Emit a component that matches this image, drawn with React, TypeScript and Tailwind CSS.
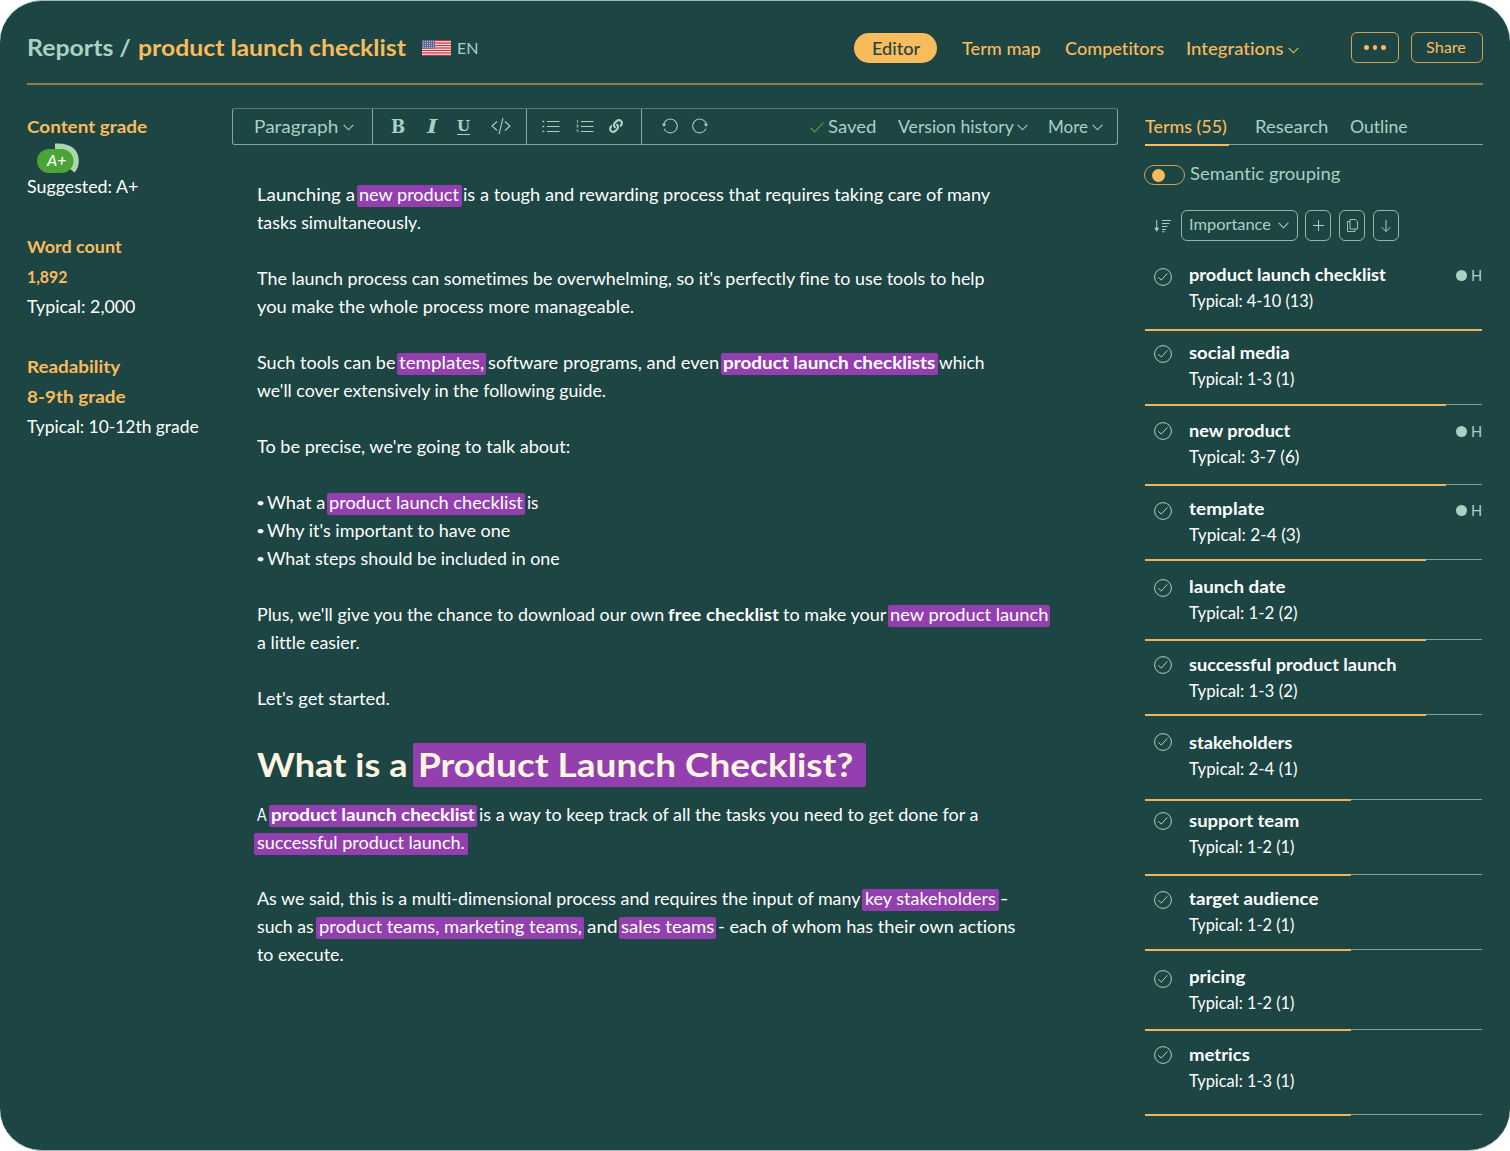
import { useLayoutEffect, useRef, type ReactNode } from "react";
import { FaLink } from "react-icons/fa";

/** A run of text whose glyphs are widened or narrowed to occupy exactly `w` pixels. */
function Fit({ w, className = "", children }: { w: number; className?: string; children: string }) {
  const ref = useRef<HTMLSpanElement>(null);
  useLayoutEffect(() => {
    const el = ref.current;
    if (!el) return;
    const stretch = () => {
      const natural = el.offsetWidth;
      if (natural > 0) el.style.transform = `scaleX(${w / natural})`;
    };
    stretch();
    document.fonts?.ready.then(stretch);
  }, [w, children]);
  return (
    <span className={`block shrink-0 whitespace-pre ${className}`} style={{ width: w }}>
      <span ref={ref} className="inline-block origin-left">{children}</span>
    </span>
  );
}

function Chevron({ className = "" }: { className?: string }) {
  return (
    <svg className={`shrink-0 ${className}`} width="11" height="7" viewBox="0 0 11 7" fill="none" stroke="currentColor" strokeWidth="1.1">
      <path d="M0.7 0.9 5.5 5.8 10.3 0.9" />
    </svg>
  );
}

function Flag() {
  return (
    <svg width="29" height="16" viewBox="0 0 29 16" className="shrink-0">
      <rect width="29" height="16" fill="#fbeeee" />
      {[0, 1, 2, 3, 4, 5, 6].map((i) => (
        <rect key={i} y={i * 2.46} width="29" height="1.25" fill="#c8313e" />
      ))}
      <rect width="13" height="8.6" fill="#5f6190" />
      {[0, 1, 2, 3].map((r) =>
        [0, 1, 2, 3, 4, 5].map((c) => (
          <circle key={`${r}-${c}`} cx={1.2 + c * 2.1} cy={1.2 + r * 2.05} r="0.55" fill="#d9d9ea" />
        )),
      )}
    </svg>
  );
}

type Seg = { t: string; w: number; gap?: number; bold?: boolean; hl?: [number, number] };

const intro: Seg[][] = [
  [{ t: "Launching a", w: 98 }, { t: "new product", w: 100, gap: 2, hl: [2, 3] }, { t: "is a tough and rewarding process that requires taking care of many", w: 527, gap: 1 }],
  [{ t: "tasks simultaneously.", w: 164 }],
  [],
  [{ t: "The launch process can sometimes be overwhelming, so it's perfectly fine to use tools to help", w: 728 }],
  [{ t: "you make the whole process more manageable.", w: 377 }],
  [],
  [{ t: "Such tools can be", w: 138 }, { t: "templates,", w: 85, gap: 2, hl: [2, 2] }, { t: "software programs, and even", w: 231, gap: 2 }, { t: "product launch checklists", w: 212, gap: 2, bold: true, hl: [2, 3] }, { t: "which", w: 46, gap: 1 }],
  [{ t: "we'll cover extensively in the following guide.", w: 349 }],
  [],
  [{ t: "To be precise, we're going to talk about:", w: 313 }],
  [],
  [{ t: "•", w: 9, gap: -1 }, { t: "What a", w: 58, gap: 2 }, { t: "product launch checklist", w: 194, gap: 2, hl: [2, 2] }, { t: "is", w: 11, gap: 2 }],
  [{ t: "•", w: 9, gap: -1 }, { t: "Why it's important to have one", w: 243, gap: 2 }],
  [{ t: "•", w: 9, gap: -1 }, { t: "What steps should be included in one", w: 293, gap: 2 }],
  [],
  [{ t: "Plus, we'll give you the chance to download our own", w: 407 }, { t: "free checklist", w: 111, gap: 4, bold: true }, { t: "to make your", w: 103, gap: 4 }, { t: "new product launch", w: 158, gap: 2, hl: [2, 2] }],
  [{ t: "a little easier.", w: 103 }],
  [],
  [{ t: "Let's get started.", w: 133 }],
];

const answer: Seg[][] = [
  [{ t: "A", w: 10 }, { t: "product launch checklist", w: 204, gap: 2, bold: true, hl: [2, 2] }, { t: "is a way to keep track of all the tasks you need to get done for a", w: 500, gap: 2 }],
  [{ t: "successful product launch.", w: 208, gap: -3, hl: [3, 3] }],
  [],
  [{ t: "As we said, this is a multi-dimensional process and requires the input of many", w: 604 }, { t: "key stakeholders", w: 131, gap: 1, hl: [3, 3] }, { t: "-", w: 8, gap: 1 }],
  [{ t: "such as", w: 57 }, { t: "product teams, marketing teams,", w: 263, gap: 2, hl: [3, 2] }, { t: "and", w: 30, gap: 3 }, { t: "sales teams", w: 93, gap: 2, hl: [2, 2] }, { t: "- each of whom has their own actions", w: 297, gap: 2 }],
  [{ t: "to execute.", w: 87 }],
];

function Lines({ lines }: { lines: Seg[][] }) {
  return (
    <div className="text-[17px] leading-[19px] text-white">
      {lines.map((line, i) => (
        <div key={i} className="flex h-7 items-start pt-[5px]">
          {line.map((s, j) => (
            <div
              key={j}
              className={`h-[21.5px] shrink-0 rounded-[2px] ${s.hl ? "bg-[#933fb0]" : ""} ${s.bold ? "font-bold" : ""} ${s.t === "•" ? "text-[12px]" : ""}`}
              style={{ marginLeft: s.gap ?? 0, paddingLeft: s.hl?.[0], paddingRight: s.hl?.[1] }}
            >
              <Fit w={s.w}>{s.t}</Fit>
            </div>
          ))}
        </div>
      ))}
    </div>
  );
}

const terms = [
  { name: "product launch checklist", w: 197, typ: "Typical: 4-10 (13)", tw: 124, h: 82, pt: 12, icon: 17.5, bar: 337, dot: 12 },
  { name: "social media", w: 101, typ: "Typical: 1-3 (1)", tw: 105, h: 75, pt: 8, icon: 12.5, bar: 301 },
  { name: "new product", w: 101, typ: "Typical: 3-7 (6)", tw: 110, h: 80, pt: 11, icon: 14.5, bar: 301, dot: 11 },
  { name: "template", w: 75, typ: "Typical: 2-4 (3)", tw: 111, h: 75, pt: 9, icon: 14.5, bar: 281, dot: 10 },
  { name: "launch date", w: 96, typ: "Typical: 1-2 (2)", tw: 108, h: 80, pt: 12, icon: 16.5, bar: 281 },
  { name: "successful product launch", w: 207, typ: "Typical: 1-3 (2)", tw: 108, h: 75, pt: 10, icon: 13.5, bar: 281 },
  { name: "stakeholders", w: 103, typ: "Typical: 2-4 (1)", tw: 108, h: 85, pt: 13, icon: 15.5, bar: 206 },
  { name: "support team", w: 110, typ: "Typical: 1-2 (1)", tw: 105, h: 75, pt: 6, icon: 9.5, bar: 206 },
  { name: "target audience", w: 129, typ: "Typical: 1-2 (1)", tw: 105, h: 75, pt: 9, icon: 13.5, bar: 206 },
  { name: "pricing", w: 56, typ: "Typical: 1-2 (1)", tw: 105, h: 80, pt: 12, icon: 17.5, bar: 206 },
  { name: "metrics", w: 61, typ: "Typical: 1-3 (1)", tw: 105, h: 85, pt: 10, icon: 13.5, bar: 206 },
];

function TermRow({ term }: { term: (typeof terms)[number] }) {
  return (
    <div className="flex flex-col" style={{ height: term.h }}>
      <div className="flex flex-1">
        <div className="w-[44px] shrink-0 pl-[9px]" style={{ paddingTop: term.icon }}>
          <svg width="18" height="18" viewBox="0 0 18 18" fill="none" stroke="#a9d1c4" strokeWidth="1">
            <circle cx="9" cy="9" r="8.4" />
            <path d="M4.3 9.3 7.3 12.1 13.3 5.4" />
          </svg>
        </div>
        <div className="flex-1 text-[17px] leading-[26px] text-white" style={{ paddingTop: term.pt }}>
          <Fit w={term.w} className="font-bold">{term.name}</Fit>
          <Fit w={term.tw}>{term.typ}</Fit>
        </div>
        {term.dot !== undefined && (
          <div className="flex h-[26px] items-center gap-1 text-[16px] text-[#a9d1c4]" style={{ marginTop: term.dot }}>
            <span className="size-[11px] rounded-full bg-[#a9d1c4]" />
            <Fit w={11}>H</Fit>
          </div>
        )}
      </div>
      <div className="flex h-[3px] items-start">
        <div className="h-[2px] bg-[#ecb45b]" style={{ width: term.bar }} />
        <div className="h-px flex-1 bg-[#7ba69d]" />
      </div>
    </div>
  );
}

function Tool({ children }: { children: ReactNode }) {
  return (
    <button className="flex h-[31px] w-[26px] items-center justify-center rounded-[6px] border border-[#8fb9ae]">
      {children}
    </button>
  );
}

function ListIcon({ numbered = false }: { numbered?: boolean }) {
  return (
    <svg width="18" height="12" viewBox="0 0 18 12" fill="none" stroke="currentColor" strokeWidth="1" className="-mt-px shrink-0">
      <path d="M5 1.5H17.5M5 6.5H17.5M5 11.5H17.5" />
      {numbered ? <path d="M1.5 0V3M0.5 5H2V7H0.5M0.5 10H2V12H0.5" strokeWidth="0.8" /> : <path d="M0.5 1.5H2.2M0.5 6.5H2.2M0.5 11.5H2.2" strokeWidth="1.6" />}
    </svg>
  );
}

function Undo({ flip = false }: { flip?: boolean }) {
  return (
    <svg width="16" height="16" viewBox="0 0 16 16" fill="none" stroke="currentColor" strokeWidth="1.1" className={`-mt-px shrink-0 ${flip ? "-scale-x-100" : ""}`}>
      <path d="M2 10.6A6.9 6.9 0 1 0 3.2 3.4" />
      <path d="M3.2 3.4A6.9 6.9 0 0 0 1.7 7" />
      <path d="M0.4 6.2H3.6L2 8.6Z" fill="currentColor" strokeWidth="0.6" />
    </svg>
  );
}

export default function App() {
  return (
    <div className="h-[1151px] w-[1510px] overflow-hidden bg-white font-[Lato,sans-serif] text-[17px] [font-variant-ligatures:none]">
      <div className="flex h-[1151px] flex-col overflow-hidden rounded-[42px] border-y border-[#a4b8b6] bg-[#1c4543] px-[27px]">
        <header className="flex h-[84px] shrink-0 items-start border-b-2 border-[#8c8048]">
          <div className="mt-[30px] flex h-[34px] flex-1 items-center text-[22px] font-bold leading-[34px]">
            <Fit w={104} className="text-[#a9d1c4]">Reports /</Fit>
            <Fit w={268} className="ml-[7px] text-[#fabb5d]">product launch checklist</Fit>
            <div className="-mt-px ml-[16px]"><Flag /></div>
            <Fit w={21} className="ml-[6px] text-[16px] font-normal text-[#a9d1c4]">EN</Fit>
          </div>
          <nav className="mt-[32px] flex h-[30px] items-center font-medium leading-[30px] text-[#fabb5d]">
            <div className="flex h-[30px] w-[83px] items-center justify-center rounded-full bg-[#fabb5d] text-[#1c4543]">
              <Fit w={48} className="pt-px">Editor</Fit>
            </div>
            <Fit w={79} className="ml-[25px] pt-px">Term map</Fit>
            <Fit w={99} className="ml-[24px] pt-px">Competitors</Fit>
            <Fit w={97} className="ml-[22px] pt-px">Integrations</Fit>
            <Chevron className="ml-[5px] mt-[4px]" />
          </nav>
          <div className="ml-[52px] mt-[31px] flex gap-3">
            <button className="flex h-[31px] w-[48px] items-center justify-center gap-[4px] rounded-[6px] border border-[#d0a258]">
              <i className="size-[4.5px] rounded-full bg-[#fabb5d]" />
              <i className="size-[4.5px] rounded-full bg-[#fabb5d]" />
              <i className="size-[4.5px] rounded-full bg-[#fabb5d]" />
            </button>
            <button className="flex h-[31px] w-[72px] items-center rounded-[6px] border border-[#d0a258] pl-[14px] text-left text-[15px] text-[#fabb5d]">
              <Fit w={40}>Share</Fit>
            </button>
          </div>
        </header>

        <div className="flex flex-1">
          <aside className="w-[205px] shrink-0 pt-[27px] leading-[30px] text-white">
            <Fit w={120} className="font-bold text-[#fabb5d]">Content grade</Fit>
            <div className="relative h-[30px]">
              <svg width="44" height="32" viewBox="0 0 44 32" className="absolute left-[9px] top-0">
                <path d="M19 1.5C34 0.5 42.5 7 42.8 18C42.9 23 41.5 27.5 38.5 30.5L34 27L30 12L19 9Z" fill="#aed6ab" />
                <rect x="1" y="7" width="36.5" height="24" rx="12" fill="#4ca336" />
              </svg>
              <span className="absolute left-[20px] top-[3px] text-[16px] font-medium italic">
                <Fit w={19}>A+</Fit>
              </span>
            </div>
            <Fit w={111}>Suggested: A+</Fit>
            <div className="mt-[30px] text-[#fabb5d]">
              <Fit w={95} className="font-bold">Word count</Fit>
              <Fit w={40} className="font-bold">1,892</Fit>
              <Fit w={108} className="text-white">Typical: 2,000</Fit>
            </div>
            <div className="mt-[30px] text-[#fabb5d]">
              <Fit w={93} className="font-bold">Readability</Fit>
              <Fit w={99} className="font-bold">8-9th grade</Fit>
              <Fit w={172} className="text-white">Typical: 10-12th grade</Fit>
            </div>
          </aside>

          <main className="w-[886px] shrink-0 pt-[23px]">
            <div className="flex h-[37px] rounded-[3px] border border-[#88a5a0] border-t-[#55786f] text-[#a9d1c4]">
              <div className="flex w-[140px] items-center border-r border-[#88a5a0] pl-[21px]">
                <Fit w={84}>Paragraph</Fit>
                <Chevron className="ml-[5px] mt-[2px]" />
              </div>
              <div className="flex w-[154px] items-center border-r border-[#88a5a0] pl-[18px] font-['DejaVu_Serif',serif] text-[18px] font-bold leading-[20px]">
                <Fit w={14}>B</Fit>
                <Fit w={10} className="ml-[22px] italic">I</Fit>
                <span className="ml-[20px] mt-px block h-[15px] w-[13px] border-b-[1.5px] border-[#a9d1c4] text-[15px] leading-[12px]">
                  <Fit w={13}>U</Fit>
                </span>
                <svg width="20" height="18" viewBox="0 0 20 18" fill="none" stroke="currentColor" strokeWidth="1.1" className="-mt-px ml-[21px] shrink-0">
                  <path d="M6 4.5 1 9 6 13.5M14 4.5 19 9 14 13.5M12 0.8 8 17.2" />
                </svg>
              </div>
              <div className="flex w-[115px] items-center border-r border-[#88a5a0] pl-[15px]">
                <ListIcon />
                <span className="w-[16px]" />
                <ListIcon numbered />
                <FaLink size={14} className="-mt-px ml-[15px]" />
              </div>
              <div className="flex flex-1 items-center pl-[20px]">
                <Undo />
                <span className="w-[14px]" />
                <Undo flip />
                <svg width="14" height="11" viewBox="0 0 14 11" fill="none" stroke="#4ca336" strokeWidth="1.2" className="ml-[102px] mt-[2px]">
                  <path d="M0.6 6 4.6 10 13.4 0.7" />
                </svg>
                <Fit w={48} className="ml-[4px]">Saved</Fit>
                <Fit w={116} className="ml-[22px]">Version history</Fit>
                <Chevron className="ml-[3px] mt-[2px]" />
                <Fit w={40} className="ml-[20px]">More</Fit>
                <Chevron className="ml-[4px] mt-[2px]" />
              </div>
            </div>

            <article className="pl-[25px] pt-[35px]">
              <Lines lines={intro} />
              <h1 className="mt-[31px] flex h-[44px] items-start text-[33px] font-bold leading-[42px] text-[#fff5e1]">
                <Fit w={151}>What is a</Fit>
                <span className="ml-[5px] block h-[44px] w-[453px] rounded-[2px] bg-[#933fb0] pl-[5px]">
                  <Fit w={435}>Product Launch Checklist?</Fit>
                </span>
              </h1>
              <div className="mt-[13px]">
                <Lines lines={answer} />
              </div>
            </article>
          </main>

          <section className="ml-[27px] w-[338px] shrink-0 text-[#a9d1c4]">
            <div className="mt-[24px] flex h-[36px] items-start border-b border-[#7ba69d] leading-[36px]">
              <div className="h-[37px] w-[84px] shrink-0 border-b-2 border-[#fabb5d] font-medium text-[#fabb5d]">
                <Fit w={82}>Terms (55)</Fit>
              </div>
              <Fit w={73} className="ml-[26px]">Research</Fit>
              <Fit w={58} className="ml-[22px]">Outline</Fit>
            </div>
            <div className="mt-[18px] flex h-[24px] items-center">
              <div className="-ml-px flex h-[20px] w-[41px] items-center rounded-full border border-[#d0a258] pl-[7px]">
                <span className="size-[13px] rounded-full bg-[#fabb5d]" />
              </div>
              <Fit w={150} className="-mt-[2px] ml-[5px]">Semantic grouping</Fit>
            </div>
            <div className="mt-[23px] flex h-[31px] items-center">
              <svg width="18" height="14" viewBox="0 0 18 14" fill="none" stroke="currentColor" strokeWidth="1" className="ml-[9px] mr-[9px]">
                <path d="M2.7 1V12M8 1.5H17M8 4.5H15.5M8 7.5H13.5M8 10.5H12M8 12.8H10.5" />
                <path d="M0.3 8.7H5.1L2.7 12.8Z" fill="currentColor" stroke="none" />
              </svg>
              <button className="flex h-[31px] w-[117px] items-center rounded-[6px] border border-[#8fb9ae] pl-[7px] text-left text-[16px]">
                <Fit w={82} className="-mt-[3px]">Importance</Fit>
                <Chevron className="ml-[7px]" />
              </button>
              <div className="ml-[7px] flex gap-[8px]">
                <Tool>
                  <svg width="11" height="11" viewBox="0 0 11 11" stroke="currentColor" strokeWidth="1"><path d="M5.5 0V11M0 5.5H11" /></svg>
                </Tool>
                <Tool>
                  <svg width="11" height="13" viewBox="0 0 11 13" fill="none" stroke="currentColor" strokeWidth="0.9"><path d="M3 0.5H8.5L10.5 2.5V10H3ZM3 2.5H0.5V12.5H8V10" /></svg>
                </Tool>
                <Tool>
                  <svg width="10" height="12" viewBox="0 0 10 12" fill="none" stroke="currentColor" strokeWidth="1"><path d="M5 0V11.3M0.7 7.2 5 11.5 9.3 7.2" /></svg>
                </Tool>
              </div>
            </div>
            <div className="mt-[9px] w-[337px]">
              {terms.map((t) => (
                <TermRow key={t.name} term={t} />
              ))}
            </div>
          </section>
        </div>
      </div>
    </div>
  );
}
